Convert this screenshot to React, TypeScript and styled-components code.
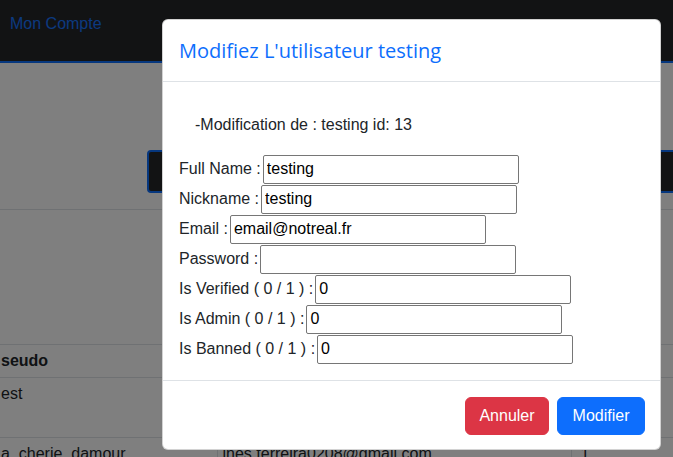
import React from "react";
import styled, { createGlobalStyle } from "styled-components";

const Global = createGlobalStyle`
  html, body { margin: 0; padding: 0; background: #fff; }
  body {
    font-family: "Liberation Sans", Arial, sans-serif;
    font-size: 16px;
    line-height: 1.5;
    color: #212529;
    overflow: hidden;
  }
  * { box-sizing: border-box; }
`;

const Page = styled.div`
  position: relative;
  width: 673px;
  height: 457px;
  overflow: hidden;
`;

const Navbar = styled.nav`
  height: 63px;
  background: #242628;
  border-bottom: 2px solid #0d6efd;
  padding: 12px 10px 0;
`;

const Brand = styled.a`
  color: #1874ff;
  text-decoration: none;
  font-size: 16px;
  line-height: 24px;
`;

const Toolbar = styled.div`
  padding: 87px 0 0 147px;
`;

const DarkButton = styled.div`
  width: 600px;
  height: 43px;
  background: #242628;
  border: 2px solid #0d6efd;
  border-radius: 4px;
`;

const Divider = styled.div`
  margin-top: 16px;
  border-top: 1px solid #dee2e6;
`;

const Table = styled.table`
  margin-top: 134px;
  border-collapse: collapse;
  table-layout: fixed;
  width: 820px;
`;

const Cell = styled.td<{ $bold?: boolean; $pl?: number; $h?: number; $edge?: boolean }>`
  border-top: 1px solid #dee2e6;
  border-bottom: 1px solid #dee2e6;
  border-left: ${(p) => (p.$edge ? "1px solid #dee2e6" : "none")};
  padding: 4px 4px 4px ${(p) => p.$pl ?? 1}px;
  height: ${(p) => (p.$h ? `${p.$h}px` : "auto")};
  vertical-align: top;
  font-weight: ${(p) => (p.$bold ? 700 : 400)};
  white-space: nowrap;
  overflow: hidden;
  line-height: 24px;
`;

const Backdrop = styled.div`
  position: absolute;
  inset: 0;
  background: rgba(0, 0, 0, 0.5);
`;

const Dialog = styled.div`
  position: absolute;
  left: 162px;
  top: 19px;
  width: 499px;
  background: #fff;
  border: 1px solid rgba(0, 0, 0, 0.175);
  border-radius: 6px;
`;

const Header = styled.div`
  padding: 16px 16px 15px;
  border-bottom: 1px solid #dee2e6;
`;

const Title = styled.h5`
  margin: 0;
  font-family: "Open Sans", "Liberation Sans", sans-serif;
  font-size: 20px;
  font-weight: 500;
  line-height: 30px;
  color: #0d6efd;
`;

const Body = styled.div`
  padding: 16px;
`;

const Intro = styled.p`
  margin: 15px 0 17px;
  padding-left: 16px;
  line-height: 24px;
`;

const Row = styled.div`
  display: flex;
  align-items: center;
  gap: 2px;
  height: 30px;
`;

const Label = styled.label`
  white-space: nowrap;
  line-height: 24px;
`;

const Input = styled.input`
  width: 256px;
  height: 29px;
  border: 1px solid #767676;
  border-radius: 2px;
  padding: 1px 3px;
  font-family: "Liberation Sans", Arial, sans-serif;
  font-size: 16px;
  color: #000;
  background: #fff;
  outline: none;
`;

const Footer = styled.div`
  display: flex;
  justify-content: flex-end;
  gap: 8px;
  padding: 16px 15px 14px;
  border-top: 1px solid #dee2e6;
`;

const Button = styled.button<{ $variant: "danger" | "primary"; $w: number }>`
  width: ${(p) => p.$w}px;
  height: 38px;
  padding: 6px 12px;
  border-radius: 6px;
  border: 1px solid ${(p) => (p.$variant === "danger" ? "#dc3545" : "#0d6efd")};
  background: ${(p) => (p.$variant === "danger" ? "#dc3545" : "#0d6efd")};
  color: #fff;
  font-family: "Liberation Sans", Arial, sans-serif;
  font-size: 16px;
  line-height: 24px;
  cursor: pointer;
`;

const fields = [
  { label: "Full Name :", value: "testing" },
  { label: "Nickname :", value: "testing" },
  { label: "Email :", value: "email@notreal.fr" },
  { label: "Password :", value: "" },
  { label: "Is Verified ( 0 / 1 ) :", value: "0" },
  { label: "Is Admin ( 0 / 1 ) :", value: "0" },
  { label: "Is Banned ( 0 / 1 ) :", value: "0" },
];

export default function App() {
  return (
    <Page>
      <Global />
      <Navbar>
        <Brand href="#">Mon Compte</Brand>
      </Navbar>
      <Toolbar>
        <DarkButton />
      </Toolbar>
      <Divider />
      <Table>
        <colgroup>
          <col style={{ width: 217 }} />
          <col style={{ width: 354 }} />
          <col />
        </colgroup>
        <tbody>
          <tr>
            <Cell $bold>seudo</Cell>
            <Cell $bold $edge $pl={5} />
            <Cell $bold $edge $pl={9} />
          </tr>
          <tr>
            <Cell $h={60}>est</Cell>
            <Cell $edge $pl={5} />
            <Cell $edge $pl={9} />
          </tr>
          <tr>
            <Cell>a_cherie_damour</Cell>
            <Cell $edge $pl={5}>ines.ferreira0208@gmail.com</Cell>
            <Cell $edge $pl={9}>1</Cell>
          </tr>
        </tbody>
      </Table>
      <Backdrop />
      <Dialog>
        <Header>
          <Title>Modifiez L'utilisateur testing</Title>
        </Header>
        <Body>
          <Intro>-Modification de : testing id: 13</Intro>
          {fields.map((f) => (
            <Row key={f.label}>
              <Label>{f.label}</Label>
              <Input defaultValue={f.value} type="text" />
            </Row>
          ))}
        </Body>
        <Footer>
          <Button $variant="danger" $w={84}>Annuler</Button>
          <Button $variant="primary" $w={88}>Modifier</Button>
        </Footer>
      </Dialog>
    </Page>
  );
}
